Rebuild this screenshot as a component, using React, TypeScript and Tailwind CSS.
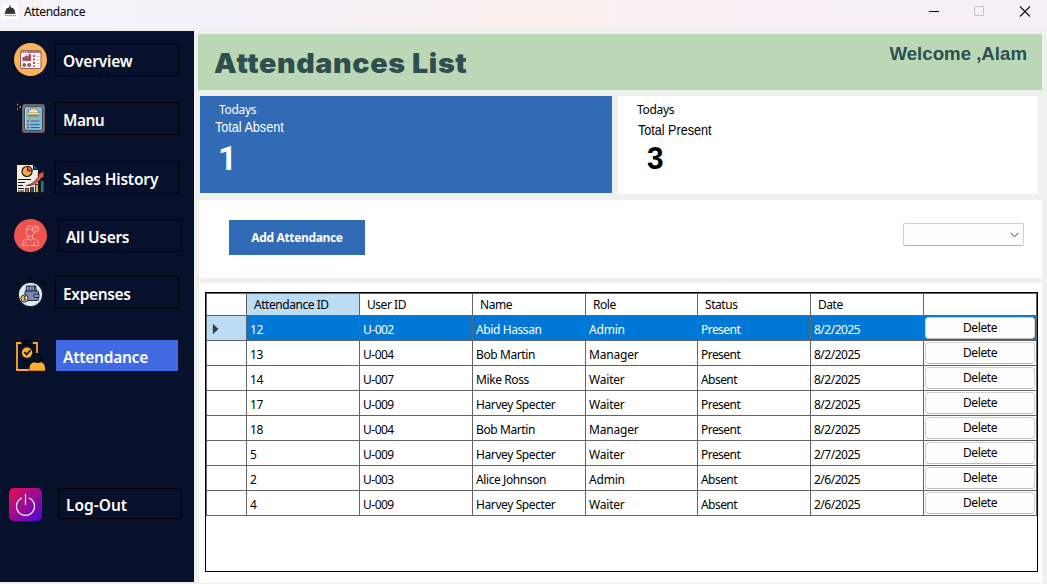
import React from "react";

const UI = "font-['Noto_Sans',sans-serif]";

const OverviewIcon = () => (
  <svg width="33" height="33" viewBox="0 0 33 33">
    <circle cx="16.500" cy="16.500" r="16.500" fill="#fdb458" />
    <rect x="6.500" y="7.500" width="20.500" height="18" rx="1.500" fill="#f9f5f6" stroke="#8b5d63" />
    <path d="M6.500 10V9A1.500 1.500 0 0 1 8 7.500h17.500A1.500 1.500 0 0 1 27 9v1z" fill="#a8767c" />
    <path d="M8 9h1M10.200 9h1M12.400 9h1" stroke="#fff" strokeWidth="1" />
    <path d="M8.500 18v-4h2v-1h1.500v2h1v-2h1.500v-2h2.500v7z" fill="#b9546a" />
    <path d="M9.500 14v4M12.500 12v6M15.500 12v6" stroke="#6c4d5c" strokeWidth=".8" />
    <circle cx="10.300" cy="22" r="1.500" fill="#4f9a7a" stroke="#c4424e" />
    <circle cx="15.200" cy="22" r="1.500" fill="#4f9a7a" stroke="#a34550" />
    <path d="M20 12v12" stroke="#c74d4c" strokeWidth="2" strokeDasharray="2 1.500" />
    <path d="M22.500 13.500h3M22.500 17h3M22.500 20.500h3" stroke="#c9bec6" />
  </svg>
);

const MenuIcon = () => (
  <svg width="33" height="33" viewBox="0 0 33 33">
    <path d="M3 2.500h1M5.500 5h1.500M3 7h1" stroke="#c9b64c" strokeWidth="1.300" />
    <rect x="8.500" y="2.500" width="22" height="28" rx="2" fill="#836c64" stroke="#6d5b57" />
    <path d="M12.500 4.500h14l2 2v20l-2 2h-14l-2-2v-20z" fill="#78bcd9" stroke="#364d65" />
    <path d="M13 6l-1.500 1.500v18L13 27" fill="none" stroke="#a6daec" />
    <path d="M14 11c.5-6 10.500-6 11 0z" fill="#fbdcae" stroke="#795a4c" strokeWidth=".7" />
    <path d="M14 11.700h11" stroke="#fff0cc" strokeWidth="1.300" />
    <path d="M14 13.100h11" stroke="#6b9b3b" strokeWidth="1.400" />
    <path d="M14.500 14.500h10" stroke="#c68052" strokeWidth="1.500" />
    <path d="M16.500 19h9M16.500 22.500h9M16.500 25.500h9" stroke="#3f627a" />
    <path d="M13 19h2M13 22.500h2M13 25.500h2" stroke="#b34750" strokeWidth="1.400" />
  </svg>
);

const SalesIcon = () => (
  <svg width="33" height="33" viewBox="0 0 33 33">
    <path d="M2.500 3.500h17l5 5v23h-22z" fill="#f3ece3" stroke="#111" />
    <path d="M19.500 3.500v5h5z" fill="#225c78" stroke="#111" />
    <circle cx="13" cy="10.500" r="5" fill="#f9ad3c" stroke="#15151a" strokeWidth="1.200" />
    <path d="M13.500 10V5.200a5 5 0 0 1 4.800 4.800z" fill="#e75752" stroke="#15151a" strokeWidth=".8" />
    <path d="M4 18.500h13M4 21.500h7M4 24.500h5M4 27.500h6M4 30h6" stroke="#111" strokeWidth="1" />
    <path d="M11.500 31.500v-4h3v4z" fill="#e85550" stroke="#111" strokeWidth=".8" />
    <path d="M16.500 31.500v-5h3v5z" fill="#235d7c" stroke="#111" strokeWidth=".8" />
    <path d="M21.500 31.500v-8h3v8z" fill="#f5ad3d" stroke="#111" strokeWidth=".8" />
    <path d="M26.500 31.500v-12h3.500v12z" fill="#287393" stroke="#111" strokeWidth=".8" />
    <path d="M12 24.500c5.500-.8 10-4.500 13-10l-1.500-1 6.500-3.200-.5 7-1.500-1c-3.500 5.500-9 8.900-16 8.200z" fill="#e75752" stroke="#111" strokeWidth=".6" />
  </svg>
);

const UsersIcon = () => (
  <svg width="33" height="33" viewBox="0 0 33 33">
    <circle cx="16.500" cy="16.500" r="16.500" fill="#ee5350" />
    <g fill="none" stroke="#ffb4ad" strokeWidth=".9">
      <path d="M18 7.500c-3-2-6 .5-5.500 4M12 11c1 0 2.500-.5 4-1.500 1 1.500 2.500 1.500 3.500 1.500" />
      <path d="M12.500 11.500c-1 3 1 6 3.500 6s4.500-2.500 4-5M14 17v2.500M18.500 17v2.500" />
      <path d="M14 19.500l-4.500 2-1.500 5h17l-1.500-5-4.500-2-2.500 2zM11 24h2M20 23v3" />
      <circle cx="21.500" cy="10" r="3.100" />
      <path d="M21.500 8v2h1.500" />
    </g>
  </svg>
);

const ExpensesIcon = () => (
  <svg width="33" height="33" viewBox="0 0 33 33">
    <path d="M16.500 7V2M6 9L3 6M27 9l3-3" stroke="#02040a" strokeWidth="1" />
    <g fill="#02040a"><circle cx="16.500" cy="2.500" r="1.500" /><circle cx="3.500" cy="7.500" r="1.600" /><circle cx="29.500" cy="7.500" r="1.600" /></g>
    <circle cx="16.500" cy="18.500" r="12.200" fill="#dfeaf5" stroke="#05080f" />
    <path d="M12 15l.5-5h9l1 5z" fill="#8dbbe4" stroke="#111827" />
    <path d="M15 10v4M18 11v3M20.500 10v4" stroke="#132238" strokeWidth="1" />
    <rect x="11" y="15" width="13.500" height="9.500" rx="1" fill="#7b89b7" stroke="#151c2c" strokeWidth=".9" />
    <path d="M20.500 18h4.500v3.500h-4.500q-2-1.700 0-3.500z" fill="#8794c0" stroke="#151c2c" strokeWidth=".9" />
    <circle cx="10.500" cy="22.500" r="3.600" fill="#f3ce87" stroke="#1e1a17" strokeWidth=".9" />
    <path d="M12 20.800c-3-1-3 1.200-1.200 1.500 2 .5 1.500 2.500-1.500 1.500M10.500 20v5" fill="none" stroke="#4b3925" strokeWidth=".7" />
  </svg>
);

const AttendanceIcon = () => (
  <svg width="33" height="33" viewBox="0 0 33 33">
    <path d="M7.500 4H3v27h12M18.500 4H23v10" fill="none" stroke="#ffa928" strokeWidth="1.800" />
    <path d="M8 5.500V3h3q2-4 4 0h3v2.500z" fill="#07102a" stroke="#02040a" strokeWidth="1.200" />
    <circle cx="13" cy="13.500" r="5.200" fill="#ffad2e" />
    <path d="M10.300 13l2.300 2.500 4-4.500" fill="none" stroke="#07102a" strokeWidth="1.800" />
    <path d="M8 22h9M7 27l2-1 1 1 3-1 2 1" fill="none" stroke="#010206" />
    <circle cx="23.500" cy="19" r="4.200" fill="#07102a" stroke="#010206" />
    <path d="M15.500 31.700v-2.500q0-5 4.500-6 3.500 1.500 7 0 4 1 4 6v2.500z" fill="#ffad2e" />
  </svg>
);

const PowerIcon = () => (
  <svg width="33" height="33" viewBox="0 0 33 33">
    <defs>
      <linearGradient id="power" x1="0" y1="0" x2="1" y2="1">
        <stop stopColor="#ed1048" /><stop offset="1" stopColor="#4a06df" />
      </linearGradient>
    </defs>
    <rect width="33" height="33" rx="5" fill="url(#power)" />
    <path d="M16.500 6v11M13 10a9 9 0 1 0 7 0" fill="none" stroke="#fff" strokeWidth="1.200" />
  </svg>
);

const ClocheIcon = () => (
  <svg width="16" height="16" viewBox="0 0 16 16">
    <path d="M0 0h16v16H0z" fill="#fff" />
    <path d="M3 10C3.500 6 5 4.500 7.500 4.200V2h1v2.200C11 4.500 13 6 13.200 10z" fill="#353331" />
    <path d="M2.500 10.500h11" stroke="#55504d" />
    <path d="M3 12.500h11" stroke="#96908c" strokeWidth="1.500" strokeDasharray="1.500 .5" />
  </svg>
);

type NavProps = { icon: React.ReactNode; label: string; row: string; gap: string; box: string; text: string };

const NavItem = ({ icon, label, row, gap, box, text }: NavProps) => (
  <div className={`flex h-[33px] items-start ${row}`}>
    <div className="h-[33px] w-[33px] shrink-0">{icon}</div>
    <button className={`flex w-[124px] items-center border pt-[2px] pl-[7px] text-left text-white ${gap} ${box}`}>
      <span className={`whitespace-nowrap text-[15.5px] leading-5 font-semibold ${text}`}>{label}</span>
    </button>
  </div>
);

const rows = [
  ["12", "U-002", "Abid Hassan", "Admin", "Present", "8/2/2025"],
  ["13", "U-004", "Bob Martin", "Manager", "Present", "8/2/2025"],
  ["14", "U-007", "Mike Ross", "Waiter", "Absent", "8/2/2025"],
  ["17", "U-009", "Harvey Specter", "Waiter", "Present", "8/2/2025"],
  ["18", "U-004", "Bob Martin", "Manager", "Present", "8/2/2025"],
  ["5", "U-009", "Harvey Specter", "Waiter", "Present", "2/7/2025"],
  ["2", "U-003", "Alice Johnson", "Admin", "Absent", "2/6/2025"],
  ["4", "U-009", "Harvey Specter", "Waiter", "Absent", "2/6/2025"],
];
const heads = ["Attendance ID", "User ID", "Name", "Role", "Status", "Date", ""];
const tracking = [
  "tracking-[-0.45px]",
  "tracking-[-0.5px]",
  "tracking-[-0.4px]",
  "tracking-[-0.2px]",
  "tracking-[-0.55px]",
  "tracking-[-0.5px]",
];
const columns = "grid grid-cols-[40px_113px_113px_113px_112px_113px_113px_113px]";

export default function App() {
  return (
    <div className={`flex h-[584px] w-[1047px] flex-col overflow-hidden bg-[#f0f0f0] text-[12px] text-black ${UI}`}>
      <header className="flex h-[27px] shrink-0 items-start bg-[linear-gradient(90deg,#f3f3fa_0%,#f3f1f8_22%,#f9f0ee_46%,#f9f0ee_56%,#f8eff5_72%,#f4f0f6_100%)]">
        <div className="ml-[2px] mt-[3px]"><ClocheIcon /></div>
        <span className="ml-[6px] mt-[4px] leading-4 tracking-[-0.35px]">Attendance</span>
        <svg className="ml-auto mr-[16px] mt-[5px]" width="103" height="13" viewBox="0 0 103 13" fill="none">
          <path d="M1 6.500h10" stroke="#000" />
          <rect x="46.500" y="1.500" width="9" height="9" rx=".5" stroke="#c5c0c6" />
          <path d="M92 1.500l10 10M102 1.500l-10 10" stroke="#111" strokeWidth="1.100" />
        </svg>
      </header>

      <div className="flex min-h-0 flex-1 pt-[4px]">
        <nav className="flex h-[551px] w-[194px] shrink-0 flex-col bg-[#07112b]">
          <NavItem icon={<OverviewIcon />} label="Overview" row="mt-[12px] ml-[14px]" gap="ml-[8px]" box="h-[33px] border-black" text="tracking-[-0.2px]" />
          <NavItem icon={<MenuIcon />} label="Manu" row="mt-[26px] ml-[14px]" gap="ml-[8px]" box="h-[33px] border-black" text="tracking-[-0.5px]" />
          <NavItem icon={<SalesIcon />} label="Sales History" row="mt-[26px] ml-[14px]" gap="ml-[8px]" box="h-[33px] border-black" text="tracking-[-0.18px]" />
          <NavItem icon={<UsersIcon />} label="All Users" row="mt-[25px] ml-[14px]" gap="ml-[11px]" box="h-[33px] border-black" text="tracking-[-0.3px]" />
          <NavItem icon={<ExpensesIcon />} label="Expenses" row="mt-[24px] ml-[14px]" gap="ml-[8px]" box="h-[33px] border-black" text="tracking-[-0.35px]" />
          <NavItem icon={<AttendanceIcon />} label="Attendance" row="mt-[30px] ml-[14px]" gap="ml-[8px]" box="h-[33px] border-[#07112b] bg-[#4169e1]" text="tracking-[-0.25px]" />
          <NavItem icon={<PowerIcon />} label="Log-Out" row="mt-[116px] ml-[9px]" gap="ml-[16px]" box="h-[31px] border-black" text="tracking-[0px]" />
        </nav>

        <main className="flex flex-1 flex-col pl-[4px]">
          <div className="mt-[3px] flex h-[56px] w-[844px] shrink-0 justify-between bg-[#bad8b6] text-[#2f4f4f]">
            <h1 className="ml-[16px] mt-[13px] origin-left scale-x-[1.06] whitespace-nowrap font-['Inter'] text-[27px] leading-[34px] font-black tracking-[0.6px]">Attendances List</h1>
            <p className="mr-[15px] mt-[9px] whitespace-nowrap font-['Liberation_Sans'] text-[18.67px] leading-[22px] font-bold">Welcome ,Alam</p>
          </div>

          <div className="mt-[6px] ml-[2px] flex h-[98px] shrink-0 gap-[6px]">
            <section className="flex h-[97px] w-[412px] flex-col items-start bg-[#316bb5] text-white">
              <span className="mt-[6px] ml-[19px] leading-4 tracking-[-0.3px]">Todays</span>
              <span className="ml-[15px] origin-left scale-x-[.84] font-['Liberation_Sans'] text-[15px] leading-[18px]">Total Absent</span>
              <span className="mt-[4px] ml-[18px] font-['Roboto'] text-[33px] leading-[38px] font-bold">1</span>
            </section>
            <section className="flex h-[98px] w-[420px] flex-col items-start bg-white">
              <span className="mt-[6px] ml-[19px] leading-4 tracking-[-0.3px]">Todays</span>
              <span className="mt-[3px] ml-[20px] origin-left scale-x-[.84] font-['Liberation_Sans'] text-[15px] leading-[18px]">Total Present</span>
              <span className="ml-[29px] origin-left scale-x-[.93] font-['Liberation_Sans'] text-[32px] leading-[38px] font-bold">3</span>
            </section>
          </div>

          <section className="mt-[6px] ml-[1px] flex h-[78px] w-[843px] shrink-0 items-start justify-between bg-white">
            <button className="mt-[20px] ml-[30px] h-[35px] w-[136px] bg-[#316bb5] pt-px text-center font-bold text-white"><span className="tracking-[-0.35px]">Add Attendance</span></button>
            <button aria-label="Filter" className="mt-[23px] mr-[18px] flex h-[23px] w-[121px] items-center justify-end rounded-[2px] border border-[#d0d0d0] border-b-[#b5b5b5] bg-[#fdfdfd] pr-[4px]">
              <svg width="9" height="6" viewBox="0 0 9 6" fill="none" stroke="#444"><path d="M.5.800l4 4 4-4" /></svg>
            </button>
          </section>

          <section className="mt-[5px] ml-[1px] h-[300px] w-[843px] shrink-0 bg-white pt-[9px] pl-[6px]">
            <div className="h-[280px] w-[833px] border border-black">
              <div className="w-[831px] border-t border-l border-[#646464]">
                <div className={`${columns} h-[22px]`}>
                  <div className="border-r border-b border-[#646464]" />
                  {heads.map((h, i) => (
                    <div key={i} className={`flex items-center border-r border-b border-[#646464] pl-[7px] whitespace-nowrap tracking-[-0.45px] ${i === 0 ? "bg-[#bcdcf4]" : ""}`}>{h}</div>
                  ))}
                </div>
                {rows.map((r, i) => (
                  <div key={i} className={`${columns} h-[25px] ${i === 0 ? "bg-[#0078d7] text-white" : ""}`}>
                    <div className={`flex items-center border-r border-b border-[#646464] pl-[5px] ${i === 0 ? "bg-[#bcdcf4]" : ""}`}>
                      {i === 0 && <svg className="mt-[2px]" width="8" height="12" viewBox="0 0 8 12"><path d="M.8.800v10.400l5.700-5.200z" fill="#3b3b3b" /></svg>}
                    </div>
                    {r.map((c, j) => (
                      <div key={j} className={`flex items-center border-r border-b border-[#646464] pt-[3px] pl-[3px] whitespace-nowrap ${tracking[j]}`}>{c}</div>
                    ))}
                    <div className="border-r border-b border-[#646464] p-px">
                      <button className="flex h-[22px] w-[110px] items-center justify-center rounded-[4px] border border-[#d0d0d0] border-b-[#bcbcbc] bg-[#fdfdfd] tracking-[-0.4px] text-black">Delete</button>
                    </div>
                  </div>
                ))}
              </div>
            </div>
          </section>
        </main>
      </div>
    </div>
  );
}
